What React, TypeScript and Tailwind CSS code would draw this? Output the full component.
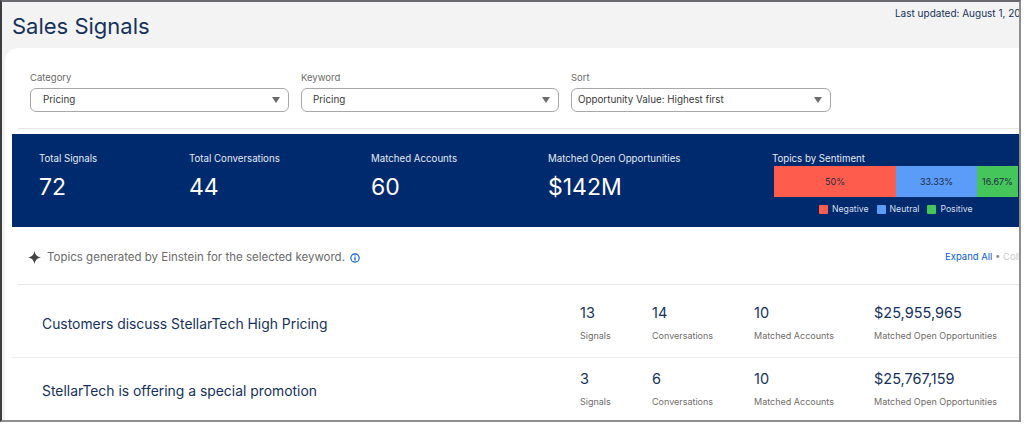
import React from 'react';

const filters = [
  { label: 'Category', value: 'Pricing', width: 'w-[259px]', pad: 'pl-3' },
  { label: 'Keyword', value: 'Pricing', width: 'w-[258px]', pad: 'pl-[11px]' },
  { label: 'Sort', value: 'Opportunity Value: Highest first', width: 'w-[260px]', pad: 'pl-[6px]' },
];

const summary = [
  { label: 'Total Signals', value: '72', width: 'w-[150px]' },
  { label: 'Total Conversations', value: '44', width: 'w-[182px]' },
  { label: 'Matched Accounts', value: '60', width: 'w-[177px]' },
  { label: 'Matched Open Opportunities', value: '$142M', width: 'w-[224px]' },
];

const topics = [
  { title: 'Customers discuss StellarTech High Pricing', signals: '13', conversations: '14', accounts: '10', value: '$25,955,965', rowPad: 'pt-[18px]', titlePad: 'mt-[11px]' },
  { title: 'StellarTech is offering a special promotion', signals: '3', conversations: '6', accounts: '10', value: '$25,767,159', rowPad: 'pt-[11px]', titlePad: 'mt-[12px]' },
];

const Stat = ({ value, label, width }: { value: string; label: string; width: string }) => (
  <div className={`${width} shrink-0`}>
    <div className="text-[14.5px] leading-[20px] text-[#16325c]">{value}</div>
    <div className="mt-[6px] text-[9px] leading-[14px] whitespace-nowrap text-[#706e6b]">{label}</div>
  </div>
);

export default function App() {
  return (
    <div className="h-[425px] w-[1024px] overflow-hidden bg-white font-['Inter',sans-serif]">
      <div className="h-[422px] w-[1021px] overflow-hidden border-t-2 border-r-2 border-b-2 border-l-2 border-t-[#6a6b6e] border-r-[#8e8e8e] border-b-[#8e8e8e] border-l-[#3c3d40] bg-[#f3f3f3]">
        <div className="flex h-[46px] items-start justify-between overflow-hidden">
          <h1 className="mt-[9px] ml-[10px] text-[22px] leading-[30px] text-[#16325c]">Sales Signals</h1>
          <div className="mt-[4px] -mr-[14px] text-[10px] leading-[14px] whitespace-nowrap text-[#16325c]">Last updated: August 1, 2024</div>
        </div>
        <div className="ml-[3px] h-[372px] overflow-hidden rounded-tl-[14px] bg-white pl-[7px]">
          <div className="ml-[6px] flex h-[81px] gap-3 border-b border-[#e5e5e5] pt-[23px] pl-[12px]">
            {filters.map((f) => (
              <div key={f.label} className={f.width}>
                <div className="text-[9.5px] leading-[14px] text-[#6b6b6b]">{f.label}</div>
                <div className={`mt-[3px] flex h-[24px] items-center justify-between rounded-[6px] border border-[#a8a8a8] pr-[8px] ${f.pad}`}>
                  <span className="text-[9.8px] text-[#3a3a3a]">{f.value}</span>
                  <span className="h-0 w-0 border-x-[4.5px] border-t-[6px] border-x-transparent border-t-[#6b6b6b]" />
                </div>
              </div>
            ))}
          </div>

          <div className="mt-[5px] flex h-[93px] bg-[#002a6e] pt-[18px] pl-[27px] text-white">
            {summary.map((s) => (
              <div key={s.label} className={`${s.width} shrink-0`}>
                <div className="text-[9.7px] leading-[14px] text-[#e4e9f2]">{s.label}</div>
                <div className="mt-[6px] text-[23px] leading-[30px]">{s.value}</div>
              </div>
            ))}
            <div className="w-[246px] shrink-0">
              <div className="text-[9.7px] leading-[14px] text-[#e4e9f2]">Topics by Sentiment</div>
              <div className="ml-[2px] flex h-[31px] text-[9px] text-[#1f2a44]">
                <div className="flex w-[122px] items-center justify-center bg-[#fe5c4c]">50%</div>
                <div className="flex w-[81px] items-center justify-center bg-[#5a9cf8]">33.33%</div>
                <div className="flex w-[41px] items-center justify-center bg-[#45c65a]">16.67%</div>
              </div>
              <div className="mt-[6px] ml-[47px] flex items-center text-[8.7px] leading-[12px] text-[#d8dfeb]">
                <span className="mr-[4px] h-[9px] w-[9px] rounded-[1px] bg-[#fe5c4c]" />
                <span className="mr-[8px]">Negative</span>
                <span className="mr-[4px] h-[9px] w-[9px] rounded-[1px] bg-[#5a9cf8]" />
                <span className="mr-[8px]">Neutral</span>
                <span className="mr-[4px] h-[9px] w-[9px] rounded-[1px] bg-[#45c65a]" />
                <span>Positive</span>
              </div>
            </div>
          </div>

          <div className="ml-[6px] flex h-[58px] items-center justify-between border-b border-[#e5e5e5] pt-[4px] pl-[10px]">
            <div className="flex items-center text-[11.5px] text-[#6b6b6b]">
              <svg viewBox="0 0 12 12" className="mr-[6px] h-[13px] w-[13px] fill-[#444]">
                <path d="M6 0 C6.6 3.6 8.4 5.4 12 6 C8.4 6.6 6.6 8.4 6 12 C5.4 8.4 3.6 6.6 0 6 C3.6 5.4 5.4 3.6 6 0 Z" />
              </svg>
              <span>Topics generated by Einstein for the selected keyword.</span>
              <svg viewBox="0 0 12 12" className="ml-[5px] h-[10px] w-[10px] fill-none stroke-[#0b5cd5]">
                <circle cx="6" cy="6" r="5" strokeWidth="1.4" />
                <path d="M6 5.2 V9 M6 3 V4.2" strokeWidth="1.6" />
              </svg>
            </div>
            <div className="w-[74px] overflow-hidden text-[9.5px] whitespace-nowrap">
              <span className="text-[#0b5cd5]">Expand All</span>
              <span className="text-[#888]"> • </span>
              <span className="text-[#c9c9c9]">Collapse All</span>
            </div>
          </div>

          {topics.map((t) => (
            <div key={t.title} className={`flex h-[73px] items-start border-b border-[#ececec] pl-[30px] last:border-b-0 ${t.rowPad}`}>
              <div className={`w-[538px] shrink-0 text-[13.9px] leading-[20px] text-[#16325c] ${t.titlePad}`}>{t.title}</div>
              <Stat value={t.signals} label="Signals" width="w-[72px]" />
              <Stat value={t.conversations} label="Conversations" width="w-[102px]" />
              <Stat value={t.accounts} label="Matched Accounts" width="w-[120px]" />
              <Stat value={t.value} label="Matched Open Opportunities" width="w-[130px]" />
            </div>
          ))}
        </div>
      </div>
    </div>
  );
}
